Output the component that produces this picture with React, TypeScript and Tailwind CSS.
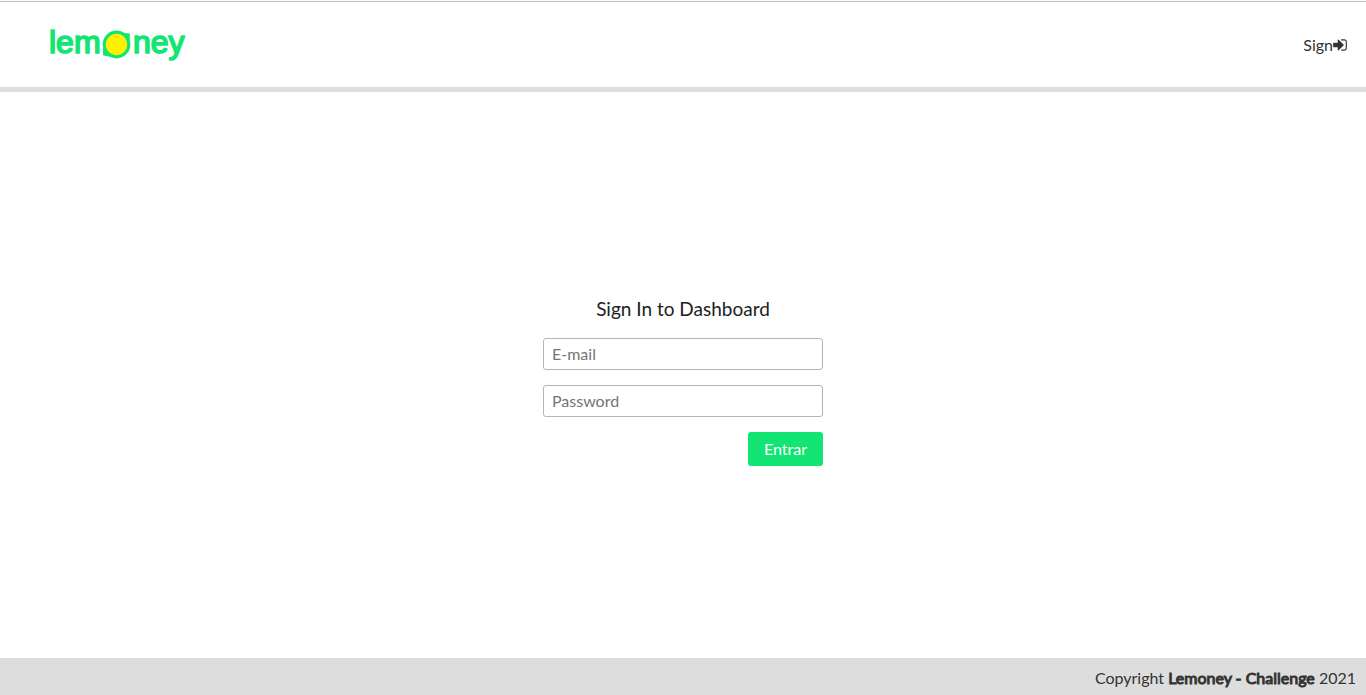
function Logo() {
  return (
    <svg
      width="146"
      height="44"
      viewBox="-4 -4 146 44"
      role="img"
      aria-label="lemoney"
      fill="#12e574"
      stroke="#12e574"
    >
      <g
        fontFamily="'Liberation Sans', Arial, sans-serif"
        fontSize="32"
        strokeWidth="1.7"
        strokeLinejoin="round"
      >
        <text x="-1" y="26">lem</text>
        <text x="83" y="26">ney</text>
      </g>
      <path d="M70 6.500L79 7.500L78.500 14ZM54 21L54 27.500L62 29Z" strokeWidth="2" strokeLinejoin="round" />
      <circle cx="66.5" cy="17.5" r="12.3" fill="#fff000" strokeWidth="3.2" />
    </svg>
  );
}

function SignInIcon() {
  return (
    <svg width="14" height="16" viewBox="0 0 1536 1792" fill="currentColor" aria-hidden="true">
      <path d="M1184 896q0 26-19 45l-544 544q-19 19-45 19t-45-19-19-45v-288H64q-26 0-45-19T0 1088V704q0-26 19-45t45-19h448V352q0-26 19-45t45-19 45 19l544 544q19 19 19 45zm352-352v704q0 119-84.500 203.500T1248 1536H928q-13 0-22.500-9.500T896 1504q0-4-1-20t-.5-26.500 3-23.500 10-19.500T928 1408h320q66 0 113-47t47-113V544q0-66-47-113t-113-47H936l-11.500-1-11.500-3-8-5.500-7-9-2-13.500q0-4-1-20t-.5-26.500 3-23.500 10-19.500T928 256h320q119 0 203.500 84.500T1536 544z" />
    </svg>
  );
}

export default function App() {
  return (
    <div className="flex min-h-screen flex-col bg-white font-['Lato',sans-serif] text-base text-[#333]">
      <div className="mt-px h-px bg-[#bfbfbf]" />
      <header className="flex h-[90px] items-center justify-between border-b-[5px] border-[#ddd] pr-[19px] pl-[46px]">
        <a href="#home">
          <Logo />
        </a>
        <a href="#signin" className="flex items-center">
          Sign
          <SignInIcon />
        </a>
      </header>
      <main className="flex flex-1 items-center justify-center px-4 pt-[13px]">
        <form className="flex w-[280px] flex-col gap-[15px]" onSubmit={(e) => e.preventDefault()}>
          <h1 className="pb-0.5 text-center text-[19px] leading-6 text-[#212121]">Sign In to Dashboard</h1>
          <input
            type="email"
            aria-label="E-mail"
            placeholder="E-mail"
            className="h-8 w-full rounded-[3px] border border-[#b5b5b5] px-2 pb-0.5 placeholder:text-[#757575]"
          />
          <input
            type="password"
            aria-label="Password"
            placeholder="Password"
            className="h-8 w-full rounded-[3px] border border-[#b5b5b5] px-2 pb-0.5 placeholder:text-[#757575]"
          />
          <button type="submit" className="h-[34px] self-end rounded-[3px] bg-[#12e574] px-4 text-white">
            Entrar
          </button>
        </form>
      </main>
      <footer className="flex h-[37px] items-center justify-end bg-[#ddd] px-2.5 pt-0.5">
        <p>
          Copyright <strong className="font-normal [-webkit-text-stroke:1px_currentColor]">Lemoney - Challenge</strong> 2021
        </p>
      </footer>
    </div>
  );
}
